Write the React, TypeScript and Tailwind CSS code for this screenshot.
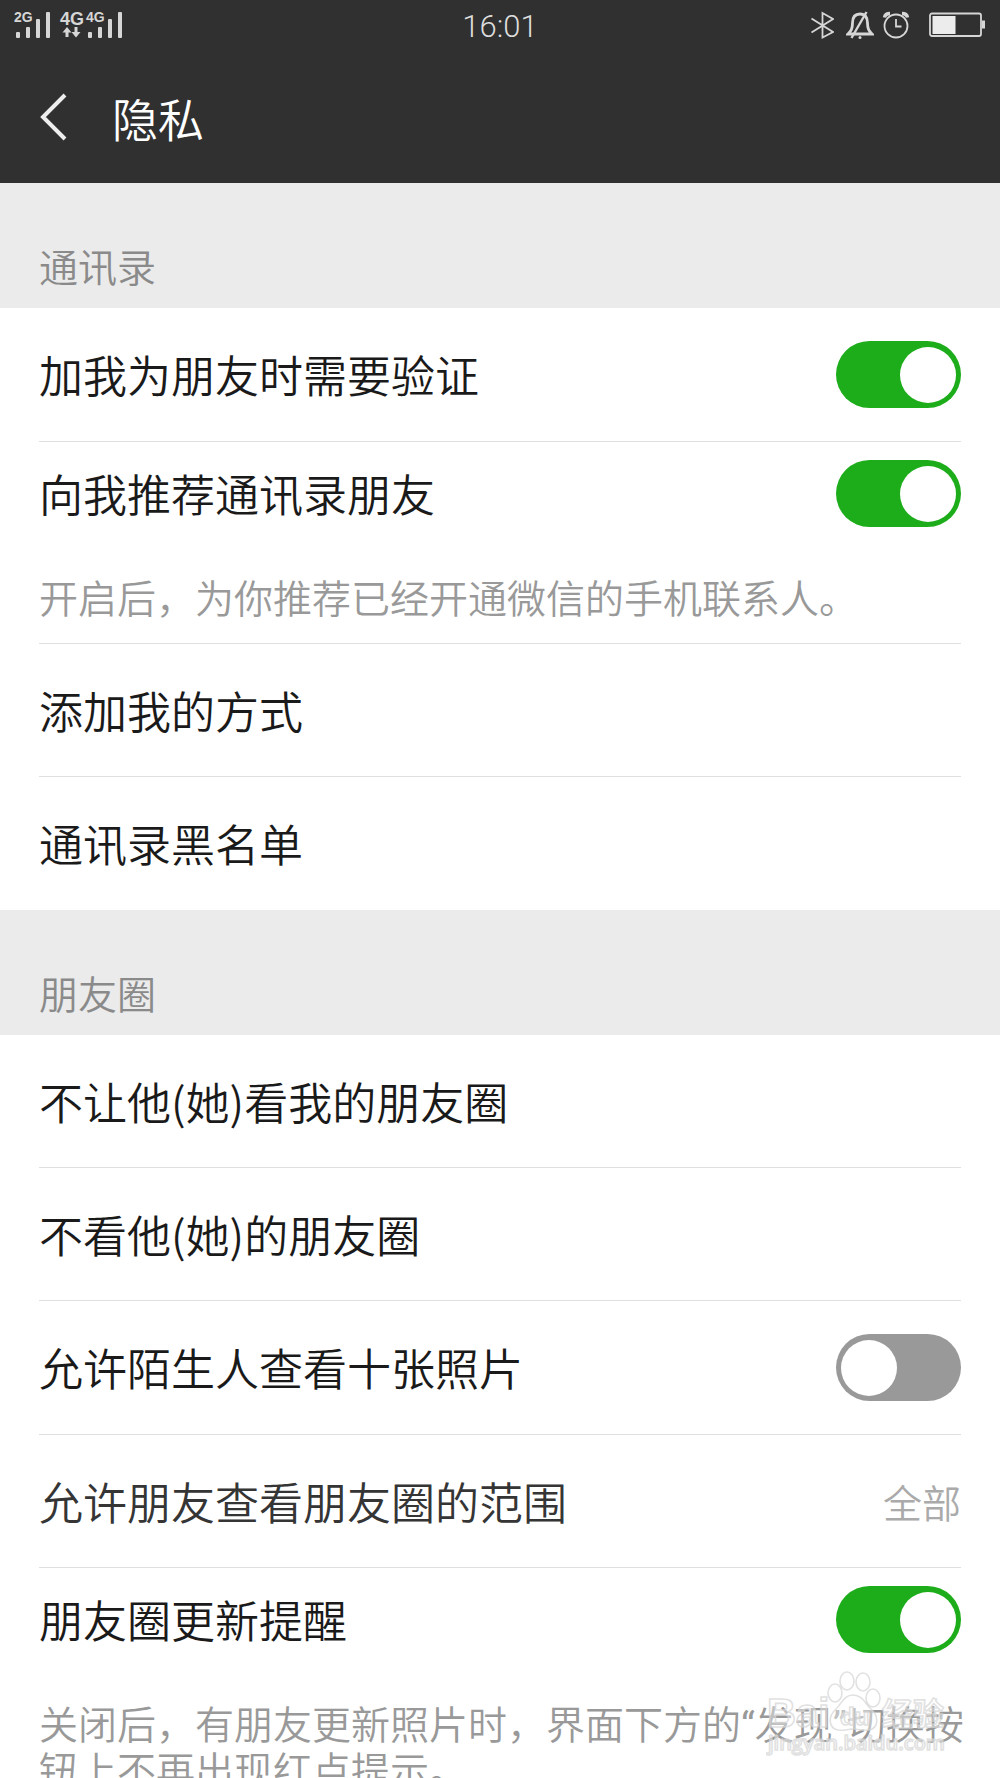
import { useState } from 'react';
import type { ReactNode } from 'react';

function SignalBars({ x }: { x: number }) {
  return (
    <g fill="#d6d6d6">
      <rect x={x} y="22" width="4" height="6" rx="1" />
      <rect x={x + 10} y="17" width="4" height="11" rx="1" />
      <rect x={x + 20} y="9" width="4" height="19" rx="1" />
      <rect x={x + 30} y="2" width="4" height="26" rx="1" />
    </g>
  );
}

function SignalIcons() {
  return (
    <svg width="112" height="30" viewBox="0 0 112 30" role="img" aria-label="2G 4G 信号" className="font-['Liberation_Sans',sans-serif] font-bold">
      <text x="0" y="12" fontSize="14" fill="#d6d6d6">2G</text>
      <SignalBars x={2} />
      <text x="46" y="15" fontSize="18" fill="#d6d6d6">4G</text>
      <path d="M53 17l4.500 5.500h-3V27h-3v-4.500h-3zM62 27.500l4.500-5.500h-3v-5h-3v5h-3z" fill="#d6d6d6" />
      <text x="72" y="12" fontSize="14" fill="#d6d6d6">4G</text>
      <SignalBars x={74} />
    </svg>
  );
}

function StatusIcons() {
  return (
    <div className="flex items-center justify-end">
      <svg width="24" height="28" viewBox="0 0 24 28" fill="none" stroke="#d6d6d6" strokeWidth="1.8" aria-label="蓝牙" role="img">
        <path d="M1.500 7.500L23 21 12.500 26.500V2L23 8 1.500 21.500" />
      </svg>
      <svg width="28" height="28" viewBox="0 0 28 28" fill="none" stroke="#d6d6d6" strokeWidth="2.8" className="ml-3" aria-label="静音" role="img">
        <path d="M2 23h24c-3-3-4.500-5-4.500-11 0-6-2.500-9-7.500-9S6.500 6 6.500 12c0 6-1.500 8-4.500 11z" />
        <path d="M20.500 1L5.500 27" strokeWidth="2.4" />
        <circle cx="14" cy="26.500" r="1.500" fill="#d6d6d6" stroke="none" />
      </svg>
      <svg width="28" height="28" viewBox="0 0 28 28" fill="none" stroke="#d6d6d6" strokeWidth="1.800" className="ml-2" aria-label="闹钟" role="img">
        <circle cx="14" cy="15" r="11.500" />
        <path d="M14 8v7.500h5.500" />
        <path d="M2.500 6.500C3 3.500 5 2.500 8 2.500M25.500 6.500c-.5-3-2.500-4-5.500-4" strokeWidth="3.500" />
      </svg>
      <svg width="58" height="26" viewBox="0 0 58 26" fill="none" className="ml-[18px]" aria-label="电量" role="img">
        <rect x="2" y="1.500" width="51" height="22.500" rx="2" stroke="#d6d6d6" strokeWidth="1.800" />
        <rect x="4.500" y="4" width="23" height="18" fill="#ececec" />
        <rect x="54" y="8.500" width="3" height="8" fill="#d6d6d6" />
      </svg>
    </div>
  );
}

function SectionTitle({ children }: { children: ReactNode }) {
  return (
    <h2 className="bg-[#ebebeb] px-[39px] pt-[60px] pb-5 text-[39px] leading-[45px] text-[#8a8a8a]">
      {children}
    </h2>
  );
}

function Switch({ id, initial }: { id: string; initial: boolean }) {
  const [on, setOn] = useState(initial);
  return (
    <input
      id={id}
      type="checkbox"
      role="switch"
      checked={on}
      onChange={() => setOn(!on)}
      className="flex h-[67px] w-[125px] shrink-0 cursor-pointer appearance-none items-center rounded-full bg-[#999999] px-[5px] before:size-14 before:rounded-full before:bg-white before:content-[''] checked:justify-end checked:bg-[#1dad1b]"
    />
  );
}

function SwitchRow({ id, label, on, note }: { id: string; label: string; on: boolean; note?: ReactNode }) {
  return (
    <li className={note ? 'border-b border-[#e0e0e0] pt-[18px] pb-6' : 'border-b border-[#e0e0e0] py-[33px]'}>
      <div className="flex items-center justify-between gap-4">
        <label htmlFor={id} className="text-[44px] leading-[67px] text-[#1a1a1a]">
          {label}
        </label>
        <Switch id={id} initial={on} />
      </div>
      {note && <p className="-mr-2 mt-[47px] text-[39px] leading-[45px] text-[#999999]">{note}</p>}
    </li>
  );
}

function LinkRow({ label, value }: { label: string; value?: string }) {
  return (
    <li className="border-b border-[#e0e0e0] last:border-transparent">
      <button type="button" className="flex w-full items-center justify-between gap-4 py-8 text-left text-[44px] leading-[68px]">
        <span className={value ? 'text-[#353535]' : 'text-[#1a1a1a]'}>{label}</span>
        {value && <span className="text-[39px] text-[#aaaaaa]">{value}</span>}
      </button>
    </li>
  );
}

function Quoted({ children }: { children: ReactNode }) {
  return (
    <>
      <span className="font-['Roboto',sans-serif] leading-none font-normal">“</span>
      {children}
      <span className="font-['Roboto',sans-serif] leading-none font-normal">”</span>
    </>
  );
}

function Watermark() {
  return (
    <svg width="184" height="92" viewBox="0 0 184 92" aria-hidden="true" className="pointer-events-none absolute right-[50px] bottom-4">
      <g fill="#ffffff" fillOpacity="0.400" stroke="#d4d4d4" strokeOpacity="0.700" strokeWidth="1.600">
        <text x="1" y="57" fontSize="40" fontWeight="700" fontFamily="Liberation Sans, sans-serif">Bai</text>
        <path d="M87 25c-9 0-11 8-17 14-8 7-8 19 2 21 6 1 9-1 15-1s10 2 16 1c10-2 10-14 2-21-6-6-9-14-18-14z" />
        <ellipse cx="69" cy="23" rx="7" ry="9" />
        <ellipse cx="81" cy="11" rx="7" ry="9" />
        <ellipse cx="97" cy="12" rx="7" ry="9" />
        <ellipse cx="107" cy="28" rx="7" ry="9" />
        <text x="74" y="55" fontSize="24" fontWeight="700" fontFamily="Liberation Sans, sans-serif">du</text>
        <text x="116" y="55" fontSize="31" fontWeight="700" fontFamily="Noto Sans CJK SC, sans-serif">经验</text>
        <text x="2" y="80" fontSize="20" fontWeight="600" fontFamily="Open Sans, sans-serif">jingyan.baidu.com</text>
      </g>
    </svg>
  );
}

export default function App() {
  return (
    <div
      lang="zh-CN"
      className="relative flex h-screen flex-col overflow-hidden bg-white font-['Noto_Sans_CJK_SC',sans-serif] font-[350]"
    >
      <header className="shrink-0 bg-[#303030] text-white">
        <div className="grid grid-cols-3 items-center px-[14px]">
          <SignalIcons />
          <time className="pt-1 text-center font-['Roboto',sans-serif] text-[31px] leading-[46px] font-light text-[#dddddd]">16:01</time>
          <StatusIcons />
        </div>
        <div className="flex items-center pt-[37px] pb-9 pl-[39px]">
          <button type="button" aria-label="返回" className="mr-[43px]">
            <svg width="30" height="50" viewBox="0 0 30 50" fill="none" stroke="#eeeeee" strokeWidth="4">
              <path d="M26 3L4 25l22 22" />
            </svg>
          </button>
          <h1 className="text-[46px] leading-[60px]">隐私</h1>
        </div>
      </header>

      <main className="min-h-0 flex-1 overflow-y-auto [scrollbar-width:none]">
        <section>
          <SectionTitle>通讯录</SectionTitle>
          <ul className="px-[39px]">
            <SwitchRow id="verify" label="加我为朋友时需要验证" on />
            <SwitchRow id="recommend" label="向我推荐通讯录朋友" on note="开启后，为你推荐已经开通微信的手机联系人。" />
            <LinkRow label="添加我的方式" />
            <LinkRow label="通讯录黑名单" />
          </ul>
        </section>
        <section>
          <SectionTitle>朋友圈</SectionTitle>
          <ul className="px-[39px]">
            <LinkRow label="不让他(她)看我的朋友圈" />
            <LinkRow label="不看他(她)的朋友圈" />
            <SwitchRow id="strangers" label="允许陌生人查看十张照片" on={false} />
            <LinkRow label="允许朋友查看朋友圈的范围" value="全部" />
            <SwitchRow
              id="updates"
              label="朋友圈更新提醒"
              on
              note={
                <>
                  关闭后，有朋友更新照片时，界面下方的<Quoted>发现</Quoted>切换按钮上不再出现红点提示。
                </>
              }
            />
          </ul>
        </section>
      </main>
      <Watermark />
    </div>
  );
}
